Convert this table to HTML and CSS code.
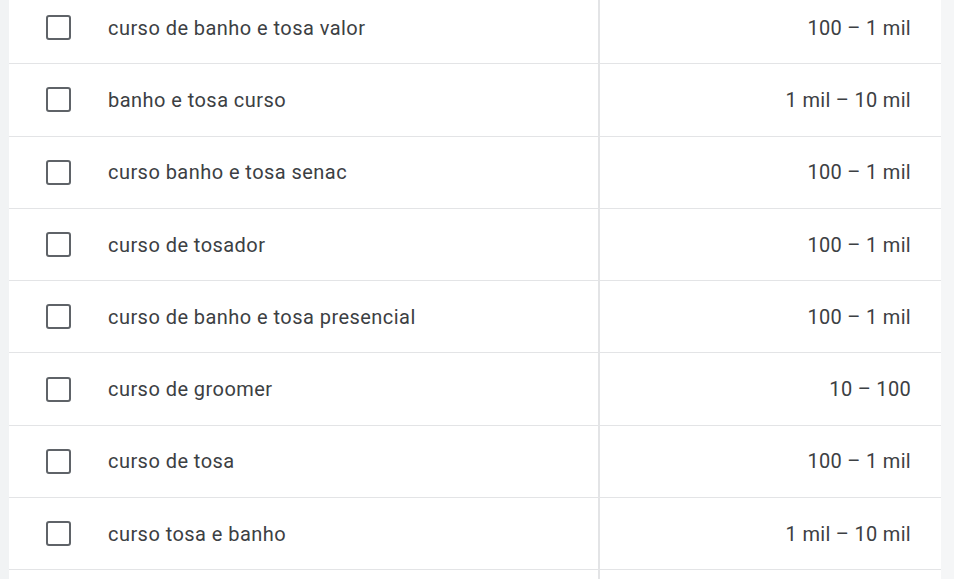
FILE: index.html
```html
<!DOCTYPE html>
<html lang="pt">
<head>
<meta charset="utf-8">
<link rel="stylesheet" href="styles.css">
</head>
<body>
<div class="page">
  <div class="gutter-left"></div>
  <div class="table">
    <div class="row"><div class="cell-kw"><span class="cb"></span><span class="kw">curso de banho e tosa valor</span></div><div class="cell-num">100 – 1 mil</div></div>
    <div class="row"><div class="cell-kw"><span class="cb"></span><span class="kw">banho e tosa curso</span></div><div class="cell-num">1 mil – 10 mil</div></div>
    <div class="row"><div class="cell-kw"><span class="cb"></span><span class="kw">curso banho e tosa senac</span></div><div class="cell-num">100 – 1 mil</div></div>
    <div class="row"><div class="cell-kw"><span class="cb"></span><span class="kw">curso de tosador</span></div><div class="cell-num">100 – 1 mil</div></div>
    <div class="row"><div class="cell-kw"><span class="cb"></span><span class="kw">curso de banho e tosa presencial</span></div><div class="cell-num">100 – 1 mil</div></div>
    <div class="row"><div class="cell-kw"><span class="cb"></span><span class="kw">curso de groomer</span></div><div class="cell-num">10 – 100</div></div>
    <div class="row"><div class="cell-kw"><span class="cb"></span><span class="kw">curso de tosa</span></div><div class="cell-num">100 – 1 mil</div></div>
    <div class="row"><div class="cell-kw"><span class="cb"></span><span class="kw">curso tosa e banho</span></div><div class="cell-num">1 mil – 10 mil</div></div>
    <div class="row"><div class="cell-kw"></div><div class="cell-num"></div></div>
  </div>
  <div class="gutter-right"></div>
</div>
</body>
</html>
```
FILE: styles.css
```css
html, body {
  margin: 0;
  padding: 0;
  height: 100%;
  overflow: hidden;
  background: #f1f3f4;
}
.page {
  display: flex;
  height: 579px;
  overflow: hidden;
  font-family: Roboto, "Liberation Sans", Arial, sans-serif;
  color: #3c4043;
}
.gutter-left {
  width: 9px;
  flex: none;
  background: #f1f3f4;
}
.gutter-right {
  flex: 1;
  background: #f5f6f7;
}
.table {
  width: 932px;
  flex: none;
  background: #fff;
  margin-top: -8px;
  display: flex;
  flex-direction: column;
}
.row {
  display: flex;
  height: 71.3px;
  flex: none;
  border-bottom: 1px solid #e3e4e6;
}
.cell-kw {
  width: 591px;
  flex: none;
  display: flex;
  align-items: center;
  padding-left: 37px;
  box-sizing: border-box;
  border-right: 2px solid #e3e4e6;
}
.cell-num {
  flex: 1;
  display: flex;
  align-items: center;
  justify-content: flex-end;
  padding-right: 30px;
  font-size: 20px;
  letter-spacing: 0.3px;
}
.cb {
  width: 21px;
  height: 21px;
  border: 2.5px solid #5f6368;
  border-radius: 3px;
  flex: none;
}
.kw {
  margin-left: 37px;
  font-size: 20px;
  letter-spacing: 0.45px;
}
```
